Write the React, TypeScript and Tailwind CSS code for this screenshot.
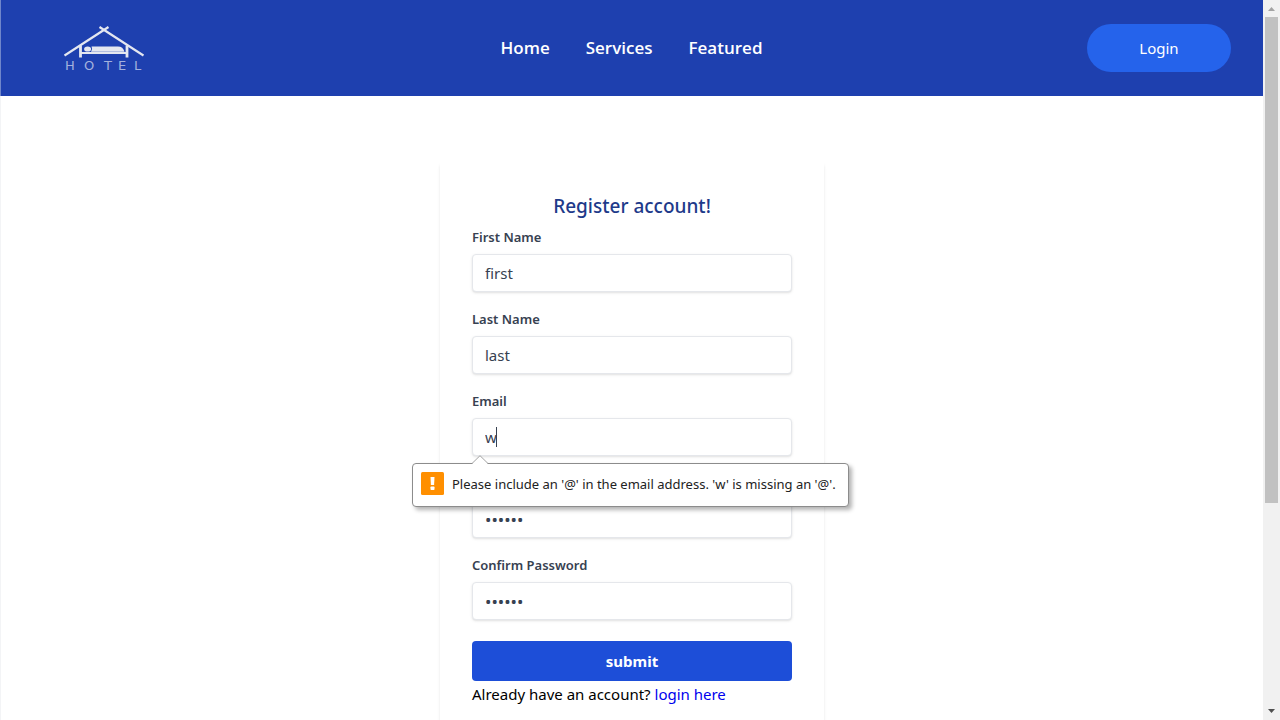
import { useState } from "react";

type Field = {
  id: string;
  label: string;
  type: string;
  value: string;
};

const fields: Field[] = [
  { id: "firstName", label: "First Name", type: "text", value: "first" },
  { id: "lastName", label: "Last Name", type: "text", value: "last" },
  { id: "email", label: "Email", type: "text", value: "w" },
  { id: "password", label: "Password", type: "password", value: "secret" },
  { id: "confirm", label: "Confirm Password", type: "password", value: "secret" },
];

function Logo() {
  return (
    <svg viewBox="0 0 80 48" className="h-12 w-20" role="img" aria-label="Hotel">
      <g stroke="#e4e7f0" fill="none">
        <path d="M.5 31.500 44.500 3M79.500 31.500 35.500 3" strokeWidth="2.200" />
        <path d="M16.500 21.500v12M63 21.500v12" strokeWidth="2.800" />
        <path d="M16 29h48" strokeWidth="2" />
      </g>
      <ellipse cx="23.600" cy="25" rx="3.500" ry="2.600" fill="#e4e7f0" />
      <path d="M27.500 22.600h26.500q5 0 6.500 5.200H27q2-2.500 .5-5.200z" fill="#e4e7f0" />
      <text
        x="1 20 40 54 70"
        y="46"
        fill="#a3b1dd"
        fontSize="13"
        fontFamily="DejaVu Sans, sans-serif"
      >
        HOTEL
      </text>
    </svg>
  );
}

function Header() {
  return (
    <header className="grid h-24 grid-cols-[1fr_auto_1fr] items-center border-l border-[#6f86cb] bg-[#1e40af] pr-8 pl-[63px]">
      <a href="#home" className="justify-self-start">
        <Logo />
      </a>
      <nav className="mr-8 flex gap-9 font-['Open_Sans',sans-serif] text-[17px] font-semibold text-white">
        <a href="#home">Home</a>
        <a href="#services">Services</a>
        <a href="#featured">Featured</a>
      </nav>
      <button type="button" className="h-12 w-36 justify-self-end rounded-full bg-[#2563eb] text-[15px] text-white">
        Login
      </button>
    </header>
  );
}

function ValidationBubble() {
  return (
    <div
      role="alert"
      className="absolute top-[45px] -left-[60px] z-10 flex h-11 w-[437px] items-center gap-2 rounded border border-[#8c8c8c] bg-white px-2 text-[13px] whitespace-nowrap text-[#222] shadow-[3px_3px_4px_rgba(0,0,0,0.3)]"
    >
      <svg viewBox="0 0 16 9" className="absolute -top-[9px] left-[59px] h-[9px] w-4" aria-hidden="true">
        <path d="M0 9 8 1l8 8z" fill="#fff" />
        <path d="M0 8.500 8 .7l8 7.800" fill="none" stroke="#a3a3a3" />
      </svg>
      <svg viewBox="0 0 23 23" className="mb-1 size-[23px] shrink-0" aria-hidden="true">
        <rect width="23" height="23" rx="1.500" fill="#ff8f00" />
        <path d="M9.500 5h4l-.4 8h-3.200z" fill="#fff" />
        <rect x="9.500" y="14.500" width="4" height="3.500" rx=".8" fill="#fff" />
      </svg>
      Please include an '@' in the email address. 'w' is missing an '@'.
    </div>
  );
}

function FormField({ field }: { field: Field }) {
  const [value, setValue] = useState(field.value);
  const textSize = field.type === "password" ? "text-[17px]" : "text-[15px]";
  return (
    <div className="mb-[17px]">
      <label htmlFor={field.id} className="mb-[7px] block text-[13px] leading-5 font-semibold text-[#374151]">
        {field.label}
      </label>
      <div className="relative">
        <input
          id={field.id}
          type={field.type}
          value={value}
          onChange={(e) => setValue(e.target.value)}
          className={`block h-[38px] w-full rounded border border-[#e5e7eb] bg-white px-3 leading-5 text-[#374151] shadow-sm outline-none ${textSize}`}
        />
        {field.id === "email" && (
          <>
            <span className="absolute top-[9px] left-6 h-5 w-px bg-[#374151]" />
            <ValidationBubble />
          </>
        )}
      </div>
    </div>
  );
}

function Scrollbar() {
  return (
    <div className="flex w-[17px] shrink-0 flex-col items-center bg-[#f1f1f1]" aria-hidden="true">
      <svg viewBox="0 0 17 17" className="size-[17px] shrink-0">
        <path d="M5 11h7L8.500 7z" fill="#a3a3a3" />
      </svg>
      <div className="h-[486px] w-[13px] bg-[#c1c1c1]" />
      <svg viewBox="0 0 17 17" className="mt-auto size-[17px] shrink-0">
        <path d="M5 6h7l-3.500 4z" fill="#505050" />
      </svg>
    </div>
  );
}

export default function App() {
  return (
    <div className="flex h-screen overflow-hidden bg-white font-['Noto_Sans','Open_Sans',sans-serif]">
      <div className="min-w-0 flex-1 overflow-hidden">
        <Header />
        <main className="flex justify-center border-l border-gray-100 pt-16">
          <form
            noValidate
            onSubmit={(e) => e.preventDefault()}
            className="w-full max-w-sm rounded px-8 pt-8 pb-16 shadow-[0_4px_3px_rgba(0,0,0,0.1)]"
          >
            <h1 className="mb-[7px] text-center text-[19px] leading-7 font-medium text-[#1e3a8a]">Register account!</h1>
            <div className="flex flex-col">
              {fields.map((field) => (
                <FormField key={field.id} field={field} />
              ))}
            </div>
            <button
              type="submit"
              className="mt-1 block h-10 w-full rounded bg-[#1d4ed8] text-[15px] font-bold text-white"
            >
              submit
            </button>
            <p className="text-[15px] leading-[26px] text-black">
              Already have an account?{" "}
              <a href="#login" className="text-[#0000ee]">
                login here
              </a>
            </p>
          </form>
        </main>
      </div>
      <Scrollbar />
    </div>
  );
}
